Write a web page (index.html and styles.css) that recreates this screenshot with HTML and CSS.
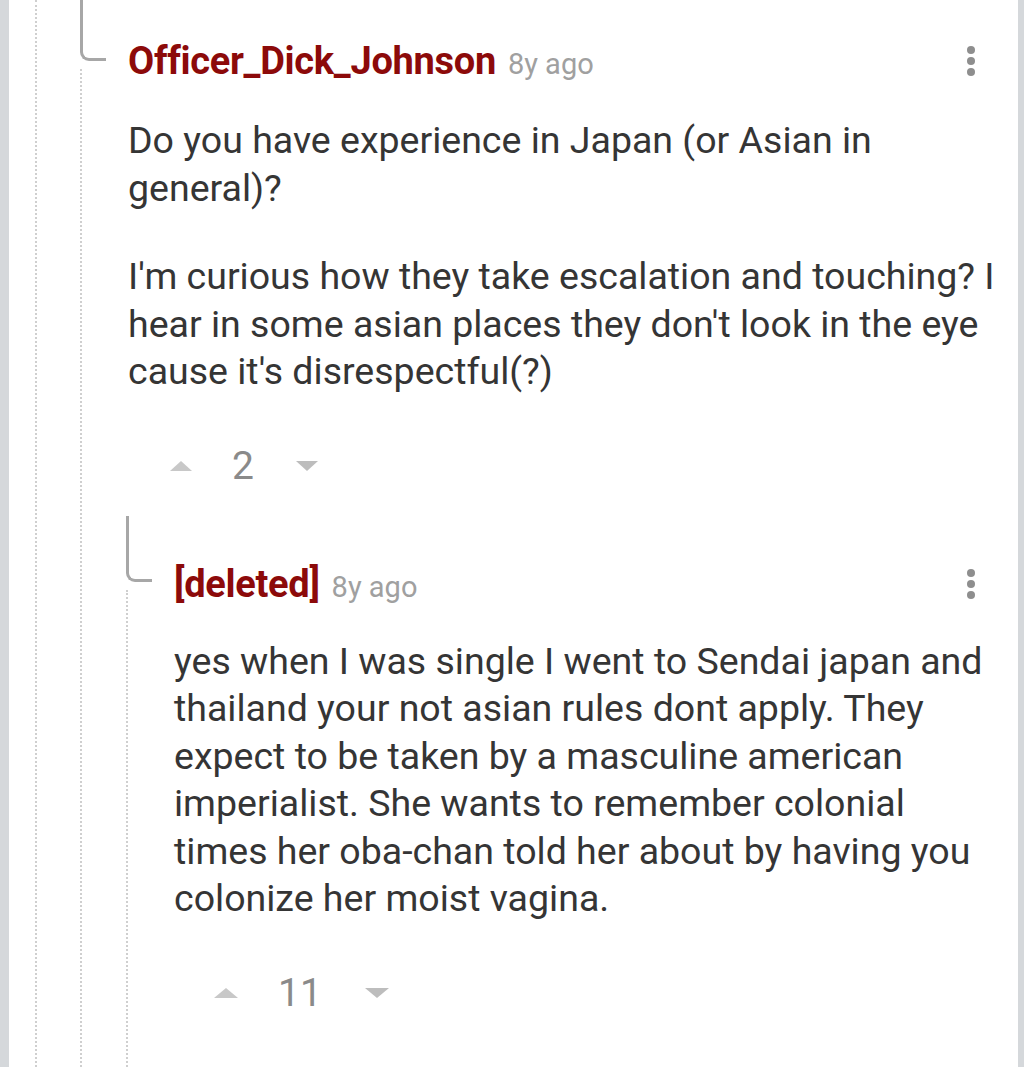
FILE: index.html
```html
<!DOCTYPE html>
<html>
<head>
<meta charset="utf-8">
<link rel="stylesheet" href="styles.css">
</head>
<body>
<div class="screen">
  <div class="thread">
    <div class="comment c1">
      <div class="gutter"><div class="elbow"></div><div class="rail"></div></div>
      <div class="main">
        <div class="head">
          <div class="who"><span class="user">Officer_Dick_Johnson</span><span class="age">8y ago</span></div>
          <div class="menu"><i></i><i></i><i></i></div>
        </div>
        <div class="body">
          <p>Do you have experience in Japan (or Asian in general)?</p>
          <p>I'm curious how they take escalation and touching? I hear in some asian places they don't look in the eye cause it's disrespectful(?)</p>
        </div>
        <div class="votes">
          <span class="up"></span><span class="score">2</span><span class="down"></span>
        </div>
        <div class="comment c2">
          <div class="gutter"><div class="elbow"></div><div class="rail"></div></div>
          <div class="main">
            <div class="head">
              <div class="who"><span class="user">[deleted]</span><span class="age">8y ago</span></div>
              <div class="menu"><i></i><i></i><i></i></div>
            </div>
            <div class="body">
              <p>yes when I was single I went to Sendai japan and thailand your not asian rules dont apply. They expect to be taken by a masculine american imperialist. She wants to remember colonial times her oba-chan told her about by having you colonize her moist vagina.</p>
            </div>
            <div class="votes">
              <span class="up"></span><span class="score">11</span><span class="down"></span>
            </div>
          </div>
        </div>
      </div>
    </div>
  </div>
</div>
</body>
</html>
```
FILE: styles.css
```css
html, body {
  margin: 0;
  padding: 0;
  background: #ffffff;
}
.screen {
  width: 1024px;
  height: 1067px;
  box-sizing: border-box;
  border-left: 9px solid #d5d8db;
  border-right: 6px solid #d5d8db;
  overflow: hidden;
  font-family: Roboto, "Liberation Sans", sans-serif;
  color: #353535;
}
.thread {
  margin-left: 26px;
  border-left: 2px dotted #cfcfcf;
  min-height: 1067px;
  display: flex;
  flex-direction: column;
}
.comment {
  display: flex;
}
.c1 {
  margin-left: 43px;
  flex: 1;
}
.c2 {
  margin-left: -2px;
  margin-top: 30px;
  flex: 1;
}
.gutter {
  width: 48px;
  flex: none;
  display: flex;
  flex-direction: column;
}
.elbow {
  width: 23px;
  height: 58px;
  border-left: 3px solid #a7a7a7;
  border-bottom: 3px solid #a7a7a7;
  border-bottom-left-radius: 9px;
}
.c2 .elbow {
  height: 63px;
}
.rail {
  flex: 1;
  margin-top: 8px;
  border-left: 2px dotted #cfcfcf;
}
.main {
  flex: 1;
  min-width: 0;
  padding-right: 18px;
  display: flex;
  flex-direction: column;
}
.c2 .main {
  padding-right: 0;
}
.head {
  display: flex;
  align-items: center;
  justify-content: space-between;
  height: 40px;
  margin-top: 41px;
}
.c2 .head {
  margin-top: 48px;
}
.user {
  font-weight: 700;
  font-size: 38px;
  color: #8c0a0a;
  letter-spacing: -0.3px;
}
.age {
  font-size: 29px;
  color: #a0a0a0;
  margin-left: 12px;
}
.menu {
  display: flex;
  flex-direction: column;
  gap: 3px;
  margin-right: 25px;
}
.menu i {
  display: block;
  width: 8px;
  height: 8px;
  border-radius: 50%;
  background: #8e8e8e;
}
.body {
  margin-top: 36px;
  font-size: 37.5px;
  line-height: 47.5px;
}
.c2 .body {
  margin-top: 34px;
}
.body p {
  margin: 0 0 41px 0;
}
.body p:last-child {
  margin-bottom: 0;
}
.votes {
  display: flex;
  align-items: center;
  height: 40px;
  margin-top: 50px;
  padding-left: 42px;
}
.up {
  width: 0;
  height: 0;
  border-left: 11px solid transparent;
  border-right: 11px solid transparent;
  border-bottom: 10px solid #c8c8c8;
}
.down {
  width: 0;
  height: 0;
  border-left: 11px solid transparent;
  border-right: 11px solid transparent;
  border-top: 10px solid #bdbdbd;
}
.score {
  font-size: 39px;
  color: #8a8a8a;
  margin: 0 42px 0 40px;
}
.c2 .votes {
  padding-left: 40px;
}
.c2 .up, .c2 .down {
  border-left-width: 12px;
  border-right-width: 12px;
}
.c2 .score {
  margin: 0 43px 0 40px;
}
```
